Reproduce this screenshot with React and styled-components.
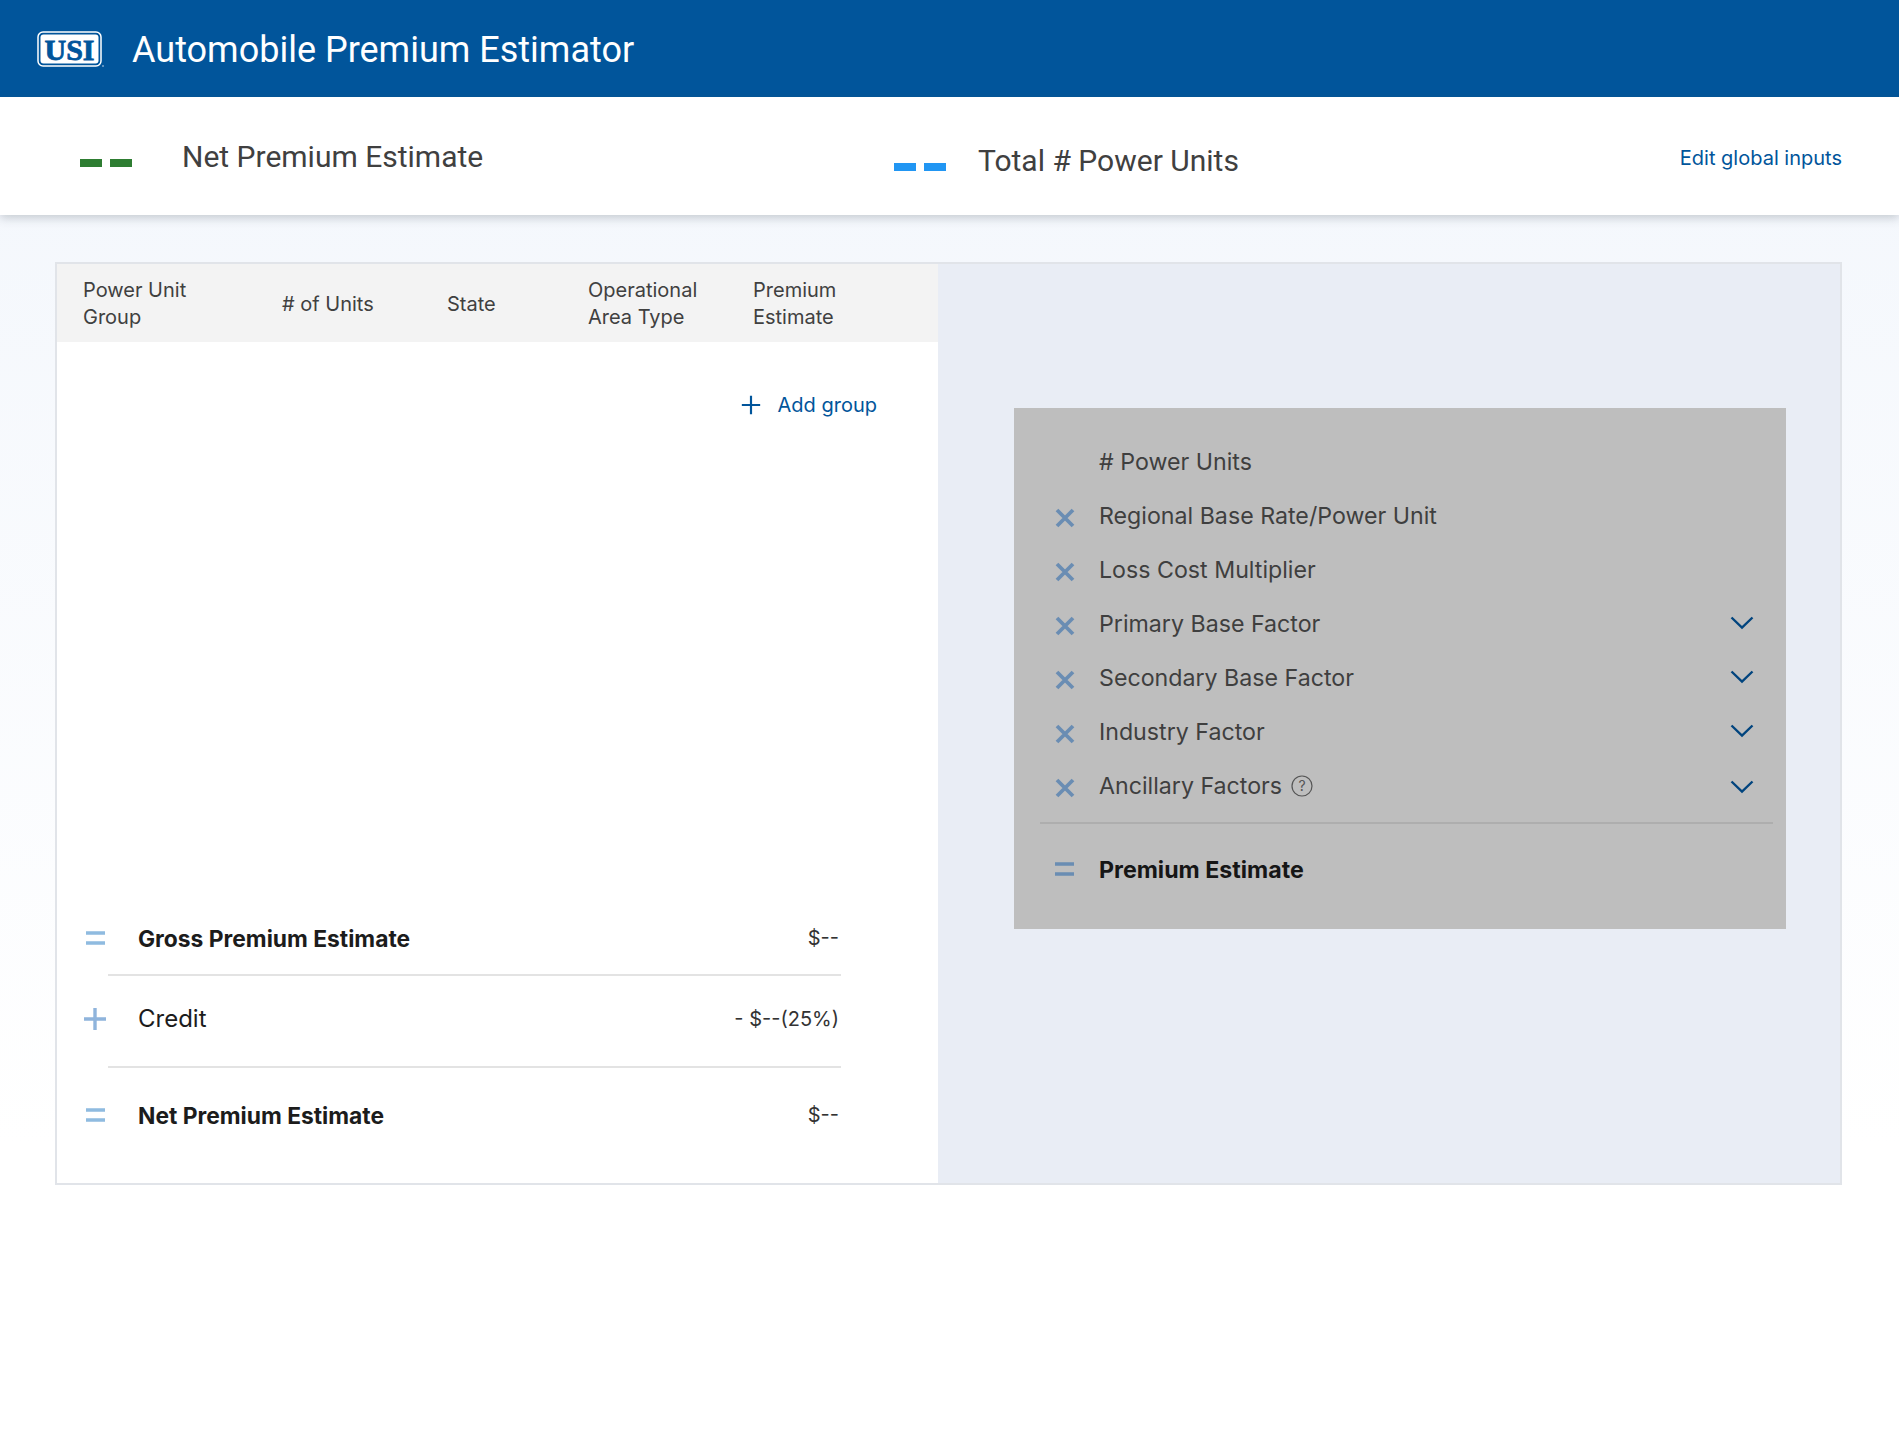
import React from 'react';
import styled, { createGlobalStyle } from 'styled-components';

const GlobalStyle = createGlobalStyle`
    html, body {
        margin: 0;
        padding: 0;
    }
    body {
        font-family: 'Inter', 'Liberation Sans', sans-serif;
        color: #222;
    }
`;

const Page = styled.div`
    min-height: 1430px;
    background: linear-gradient(180deg, #f2f6fc 0%, #ffffff 80%);
`;

const Header = styled.header`
    display: flex;
    align-items: center;
    height: 97px;
    padding: 2px 0 0 37px;
    box-sizing: border-box;
    background-color: #01559b;
`;

const Title = styled.h1`
    margin: 0 0 0 27px;
    font-family: 'Roboto', sans-serif;
    font-weight: 400;
    font-size: 36px;
    color: #fff;
`;

const SummaryBar = styled.div`
    display: flex;
    height: 118px;
    padding: 0 57px 0 80px;
    background-color: #fff;
    box-shadow: 0 3px 9px rgba(60, 70, 85, 0.25);
`;

const Stat = styled.div`
    display: flex;
    align-items: center;
    width: ${props => props.$width}px;
    height: 118px;
    padding-top: ${props => props.$top}px;
    box-sizing: border-box;
`;

const Dashes = styled.div`
    display: flex;
    gap: 8px;
    margin: 14px ${props => props.$gap}px 0 0;
`;

const Dash = styled.span`
    width: 22px;
    height: 8px;
    background-color: ${props => props.$color};
`;

const StatLabel = styled.span`
    font-family: 'Roboto', sans-serif;
    font-size: 30px;
    color: #404040;
`;

const EditLink = styled.a`
    margin: 46px 0 0 auto;
    font-size: 20px;
    line-height: 30px;
    height: 30px;
    color: #01559b;
`;

const Card = styled.main`
    display: flex;
    height: 923px;
    margin: 47px 57px 0 55px;
    border: 2px solid #e1e4e9;
    box-sizing: border-box;
`;

const LeftPanel = styled.section`
    display: flex;
    flex-direction: column;
    width: 881px;
    background-color: #fff;
`;

const TableHead = styled.div`
    display: grid;
    grid-template-columns: 199px 165px 141px 165px 1fr;
    align-items: center;
    height: 78px;
    padding: 2px 0 0 26px;
    box-sizing: border-box;
    background-color: #f3f3f3;
`;

const HeadCell = styled.div`
    font-size: 20px;
    line-height: 27px;
    color: #404040;
`;

const AddGroup = styled.a`
    display: flex;
    align-items: center;
    align-self: flex-end;
    gap: 17px;
    margin: 51px 61px 0 0;
    font-size: 20px;
    color: #01559b;
`;

const Totals = styled.div`
    margin-top: auto;
    padding-bottom: 21px;
`;

const TotalRow = styled.div`
    display: flex;
    align-items: center;
    height: ${props => props.$height}px;
    padding: 0 99px ${props => props.$lift || 0}px 0;
    box-sizing: border-box;
`;

const IconCell = styled.div`
    display: flex;
    justify-content: center;
    width: 76px;
    flex-shrink: 0;
`;

const TotalLabel = styled.div`
    margin-left: 5px;
    font-size: ${props => (props.$bold ? 22.8 : 24)}px;
    font-weight: ${props => (props.$bold ? 700 : 400)};
    color: #1c1c1c;
`;

const TotalValue = styled.div`
    margin-left: auto;
    font-size: 20px;
    color: #333;
`;

const Rule = styled.hr`
    height: 2px;
    margin: 0 97px 0 51px;
    border: none;
    background-color: #e3e3e3;
`;

const RightPanel = styled.section`
    flex: 1;
    padding: 144px 54px 0 76px;
    background-color: #e9edf5;
`;

const FactorPanel = styled.div`
    height: 521px;
    padding-top: 26px;
    box-sizing: border-box;
    background-color: #bebebe;
`;

const FactorRow = styled.div`
    display: flex;
    align-items: center;
    height: 54px;
    padding-right: 32px;
`;

const FactorIcon = styled.div`
    display: flex;
    width: 85px;
    margin-top: ${props => (props.$flat ? 0 : 5)}px;
    padding-left: 41px;
    box-sizing: border-box;
    flex-shrink: 0;
`;

const FactorLabel = styled.div`
    display: flex;
    align-items: center;
    gap: 9px;
    margin-top: 2px;
    font-size: 23.2px;
    font-weight: ${props => (props.$bold ? 700 : 400)};
    color: ${props => (props.$bold ? '#161616' : '#3f3f3f')};
`;

const Chevron = styled.div`
    display: flex;
    margin: ${props => (props.$low ? 4 : 0)}px 0 0 auto;
`;

const FactorRule = styled.hr`
    height: 2px;
    margin: 10px 13px 18px 26px;
    border: none;
    background-color: #aeaeae;
`;

const Logo = () => (
    <svg width="68" height="38" viewBox="0 0 68 38">
        <rect x="1" y="1" width="63" height="34" rx="5" fill="#01559b" stroke="#fff" strokeWidth="1.5" />
        <rect x="3.5" y="3.5" width="58" height="29" rx="3" fill="#fff" />
        <text x="32.5" y="28.5" textAnchor="middle" fontFamily="'Liberation Serif', serif" fontWeight="700" fontSize="30" stroke="#01559b" strokeWidth="0.8" fill="#01559b">USI</text>
        <circle cx="66" cy="35" r="1" fill="#7fa6cc" />
    </svg>
);

const PlusIcon = ({ size, color, width }) => (
    <svg width={size} height={size} viewBox="0 0 24 24">
        <path d="M12 1v22M1 12h22" stroke={color} strokeWidth={width} fill="none" />
    </svg>
);

const EqualsIcon = ({ color }) => (
    <svg width="19" height="14" viewBox="0 0 19 14">
        <path d="M0 2h19M0 12h19" stroke={color} strokeWidth="3.5" fill="none" />
    </svg>
);

const TimesIcon = () => (
    <svg width="20" height="20" viewBox="0 0 20 20">
        <path d="M2 2l16 16M18 2L2 18" stroke="#6a8db3" strokeWidth="3.8" fill="none" />
    </svg>
);

const ChevronIcon = () => (
    <svg width="24" height="14" viewBox="0 0 24 14">
        <path d="M1.5 1.5L12 11.5L22.5 1.5" stroke="#01447e" strokeWidth="2.4" fill="none" />
    </svg>
);

const HelpIcon = () => (
    <svg width="22" height="22" viewBox="0 0 22 22">
        <circle cx="11" cy="11" r="10" stroke="#555" strokeWidth="1.2" fill="none" />
        <text x="11" y="16" textAnchor="middle" fontFamily="'Inter', sans-serif" fontSize="14" fill="#555">?</text>
    </svg>
);

const factors = [
    { label: 'Regional Base Rate/Power Unit' },
    { label: 'Loss Cost Multiplier' },
    { label: 'Primary Base Factor', open: true },
    { label: 'Secondary Base Factor', open: true },
    { label: 'Industry Factor', open: true },
    { label: 'Ancillary Factors', open: true, help: true },
];

export default function App() {
    return (
        <Page>
            <GlobalStyle />
            <Header>
                <Logo />
                <Title>Automobile Premium Estimator</Title>
            </Header>
            <SummaryBar>
                <Stat $width={814} $top={0}>
                    <Dashes $gap={50}>
                        <Dash $color='#2e7d32' />
                        <Dash $color='#2e7d32' />
                    </Dashes>
                    <StatLabel>Net Premium Estimate</StatLabel>
                </Stat>
                <Stat $width={600} $top={8}>
                    <Dashes $gap={32}>
                        <Dash $color='#2196f3' />
                        <Dash $color='#2196f3' />
                    </Dashes>
                    <StatLabel>Total # Power Units</StatLabel>
                </Stat>
                <EditLink>Edit global inputs</EditLink>
            </SummaryBar>
            <Card>
                <LeftPanel>
                    <TableHead>
                        <HeadCell>Power Unit<br />Group</HeadCell>
                        <HeadCell># of Units</HeadCell>
                        <HeadCell>State</HeadCell>
                        <HeadCell>Operational<br />Area Type</HeadCell>
                        <HeadCell>Premium<br />Estimate</HeadCell>
                    </TableHead>
                    <AddGroup>
                        <PlusIcon size={20} color='#01559b' width={2.6} />
                        Add group
                    </AddGroup>
                    <Totals>
                        <TotalRow $height={72}>
                            <IconCell><EqualsIcon color='#8fbbe0' /></IconCell>
                            <TotalLabel $bold>Gross Premium Estimate</TotalLabel>
                            <TotalValue>$--</TotalValue>
                        </TotalRow>
                        <Rule />
                        <TotalRow $height={90} $lift={5}>
                            <IconCell><PlusIcon size={24} color='#8fb4dc' width={3.4} /></IconCell>
                            <TotalLabel>Credit</TotalLabel>
                            <TotalValue>- $--(25%)</TotalValue>
                        </TotalRow>
                        <Rule />
                        <TotalRow $height={94}>
                            <IconCell><EqualsIcon color='#8fbbe0' /></IconCell>
                            <TotalLabel $bold>Net Premium Estimate</TotalLabel>
                            <TotalValue>$--</TotalValue>
                        </TotalRow>
                    </Totals>
                </LeftPanel>
                <RightPanel>
                    <FactorPanel>
                        <FactorRow>
                            <FactorIcon />
                            <FactorLabel># Power Units</FactorLabel>
                        </FactorRow>
                        {factors.map(factor => (
                            <FactorRow key={factor.label}>
                                <FactorIcon><TimesIcon /></FactorIcon>
                                <FactorLabel>
                                    {factor.label}
                                    {factor.help && <HelpIcon />}
                                </FactorLabel>
                                {factor.open && <Chevron $low={factor.help}><ChevronIcon /></Chevron>}
                            </FactorRow>
                        ))}
                        <FactorRule />
                        <FactorRow>
                            <FactorIcon $flat><EqualsIcon color='#6a8db3' /></FactorIcon>
                            <FactorLabel $bold>Premium Estimate</FactorLabel>
                        </FactorRow>
                    </FactorPanel>
                </RightPanel>
            </Card>
        </Page>
    );
}
